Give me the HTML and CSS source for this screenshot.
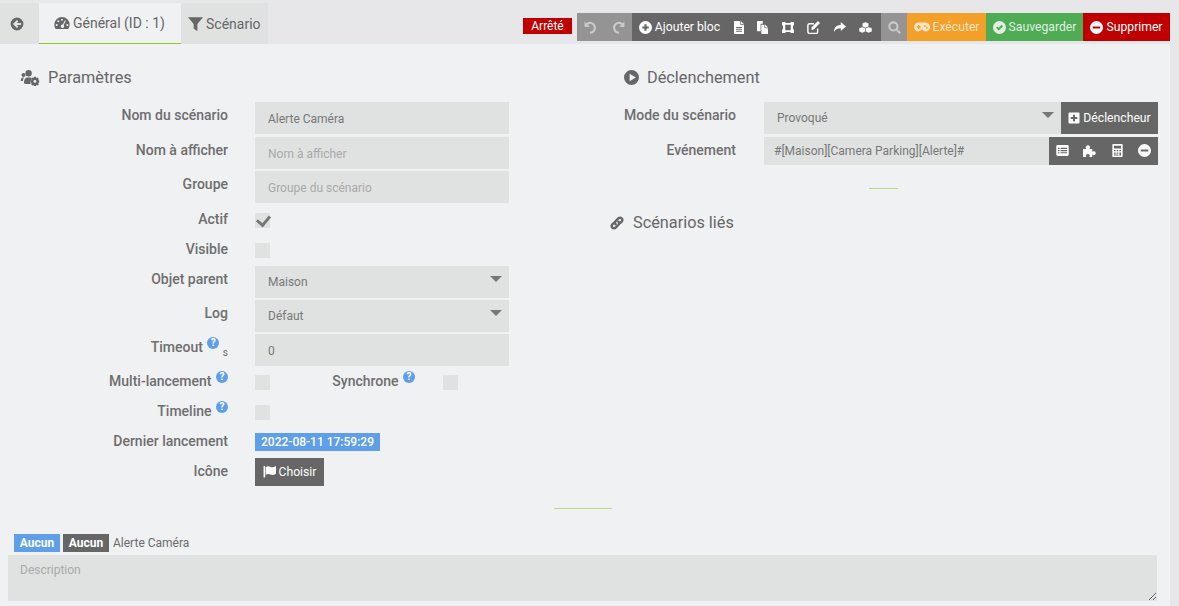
FILE: index.html
```html
<!DOCTYPE html>
<html lang="fr">
<head>
<meta charset="UTF-8">
<meta name="viewport" content="width=device-width, initial-scale=1.0">
<title>Scénario</title>
<link rel="stylesheet" href="styles.css">
</head>
<body>
<svg class="sprite" xmlns="http://www.w3.org/2000/svg">
  <symbol id="i-back" viewBox="0 0 24 24"><path fill-rule="evenodd" d="M12 1a11 11 0 1 0 0 22a11 11 0 1 0 0-22zM12 5L5 12l7 7 2.5-2.5-2.7-2.7H19v-3.600h-7.200l2.700-2.700z"/></symbol>
  <symbol id="i-dash" viewBox="0 0 24 24"><path fill-rule="evenodd" d="M12 3A11.500 11.500 0 0 0 .5 14.500c0 2.500.8 4.800 2.200 6.500h18.600a11.500 11.500 0 0 0 2.200-6.500A11.500 11.500 0 0 0 12 3zM12 5.500a1.500 1.500 0 1 1 0 3a1.500 1.500 0 1 1 0-3zM6.500 8a1.500 1.500 0 1 1 0 3a1.500 1.500 0 1 1 0-3zM4 13.500a1.500 1.500 0 1 1 0 3a1.500 1.500 0 1 1 0-3zM20 13.500a1.500 1.500 0 1 1 0 3a1.500 1.500 0 1 1 0-3zM16.500 7.800l1.300.7-3.300 6.500a2.600 2.600 0 1 1-1.400-.7z"/></symbol>
  <symbol id="i-filter" viewBox="0 0 24 24"><path d="M0 1h24l-9 11v11.500l-6-4.500v-7z"/></symbol>
  <symbol id="i-users" viewBox="0 0 26 24"><circle cx="11" cy="6" r="4.500"/><circle cx="3.800" cy="8.500" r="2.800"/><path d="M0 17c0-3 1-5 3-5h1.500C3.500 13.500 3 15 3 17zM4.500 19c0-4 2-7 4-7h5c1 0 1.500.5 2 1l-2 5.500.5 2.500H7c-1.500 0-2.500-.5-2.500-2z"/><path fill-rule="evenodd" d="M18.500 11h3l.4 1.800 1.700-.8 1.900 2.100-1 1.500 1.500.8v2.800l-1.500.6 1 1.600-1.900 2-1.700-.8-.4 1.400h-3l-.4-1.400-1.700.8-1.900-2 1-1.600-1.500-.6v-2.800l1.500-.8-1-1.500 1.900-2.100 1.700.8zM20 15.500a2 2 0 1 0 0 4a2 2 0 1 0 0-4z"/></symbol>
  <symbol id="i-play" viewBox="0 0 24 24"><path fill-rule="evenodd" d="M12 0a12 12 0 1 0 0 24a12 12 0 1 0 0-24zM9 6l10 6-10 6z"/></symbol>
  <symbol id="i-link" viewBox="0 0 24 24"><g fill="none" stroke="currentColor" stroke-width="3.600" stroke-linecap="round"><path d="M10 14c-1.500-1.500-1.500-3.500 0-5l4-4c1.500-1.500 3.500-1.500 5 0s1.500 3.500 0 5l-2 2"/><path d="M14 10c1.500 1.500 1.500 3.500 0 5l-4 4c-1.500 1.500-3.500 1.500-5 0s-1.500-3.500 0-5l2-2"/></g></symbol>
  <symbol id="i-undo" viewBox="0 0 24 24"><path fill="none" stroke="currentColor" stroke-width="4.200" d="M11 21.500a9 9 0 1 0-6-15.500L3 8"/><path d="M1 1l10 10H1z"/></symbol>
  <symbol id="i-redo" viewBox="0 0 24 24"><path fill="none" stroke="currentColor" stroke-width="4.200" d="M13 21.500a9 9 0 1 1 6-15.500l2 2"/><path d="M23 1L13 11h10z"/></symbol>
  <symbol id="i-plus-circle" viewBox="0 0 24 24"><path fill-rule="evenodd" d="M12 0a12 12 0 1 0 0 24a12 12 0 1 0 0-24zM10 6h4v4h4v4h-4v4h-4v-4H6v-4h4z"/></symbol>
  <symbol id="i-file" viewBox="3 0 19 24" preserveAspectRatio="none"><path fill-rule="evenodd" d="M3 0h12v7h7v17H3zM7 11v1.800h11V11zM7 14.500v1.800h11v-1.800zM7 18v1.800h11V18z"/><path d="M16.500 .5L21.500 5.500h-5z"/></symbol>
  <symbol id="i-copy" viewBox="1 1 23 23" preserveAspectRatio="none"><path d="M1 2.500A1.500 1.500 0 0 1 2.500 1H13v5H8.500v13H1z"/><path d="M10 7.500h6.500V14H24v8.500a1.500 1.500 0 0 1-1.500 1.500h-11a1.500 1.500 0 0 1-1.500-1.500z"/><path d="M18 7l6 5.500h-6z"/></symbol>
  <symbol id="i-frame" viewBox="0 1 24 22" preserveAspectRatio="none"><path fill-rule="evenodd" d="M0 1h7v2h10V1h7v7h-2v8h2v7h-7v-2H7v2H0v-7h2V8H0zM6.500 6.500v11h11v-11z"/></symbol>
  <symbol id="i-edit" viewBox="1 1 22 21.500" preserveAspectRatio="none"><path fill="none" stroke="currentColor" stroke-width="2.400" d="M19 13.500V19a2.500 2.500 0 0 1-2.500 2.500H5A2.500 2.500 0 0 1 2.500 19V8A2.500 2.500 0 0 1 5 5.500h8"/><path d="M9 11.500L19.500 1 23 4.500 12.500 15 8.500 16z"/></symbol>
  <symbol id="i-share" viewBox="1 2 23 20" preserveAspectRatio="none"><path d="M14 2l10 9-10 9v-5.500C8 14.500 4 16 1 22c0-8 4-14 13-14z"/></symbol>
  <symbol id="i-cubes" viewBox="0 0 24 23.500" preserveAspectRatio="none"><g stroke="#666" stroke-width="1"><path d="M12 0l6 2.800v7.400L12 13l-6-2.800V2.800z"/><path d="M6 10.500L12 13v7.500L6 23.500 0 20.500V13z"/><path d="M18 10.500L24 13v7.500l-6 3-6-3V13z"/></g></symbol>
  <symbol id="i-search" viewBox="0 0 24 24"><circle cx="10" cy="10" r="7.500" fill="none" stroke="currentColor" stroke-width="3.800"/><path d="M15 18l3-3 6 6-3 3z"/></symbol>
  <symbol id="i-gamepad" viewBox="0 0 28 24"><path fill-rule="evenodd" d="M8 4h12a8 8 0 0 1 0 16c-2 0-3.500-1.500-4.500-3h-3c-1 1.500-2.500 3-4.500 3A8 8 0 0 1 8 4zM7 8.500v2.300H4.800v2.400H7v2.300h2.400v-2.300h2.200v-2.400H9.400V8.500zM19 9a1.500 1.500 0 1 0 0 3a1.500 1.500 0 1 0 0-3zM22.500 12a1.500 1.500 0 1 0 0 3a1.500 1.500 0 1 0 0-3z"/></symbol>
  <symbol id="i-check-circle" viewBox="0 0 24 24"><path fill-rule="evenodd" d="M12 0a12 12 0 1 0 0 24a12 12 0 1 0 0-24zM5.500 12.500L8 10l2.500 2.500L16 7l2.500 2.500-8 8z"/></symbol>
  <symbol id="i-minus-circle" viewBox="0 0 24 24"><path fill-rule="evenodd" d="M12 0a12 12 0 1 0 0 24a12 12 0 1 0 0-24zM5 10h14v4H5z"/></symbol>
  <symbol id="i-plus-square" viewBox="0 0 24 24"><path fill-rule="evenodd" d="M3 1h18a2 2 0 0 1 2 2v18a2 2 0 0 1-2 2H3a2 2 0 0 1-2-2V3a2 2 0 0 1 2-2zM10 5.500v4.500H5.500v4H10v4.500h4V14h4.500v-4H14V5.500z"/></symbol>
  <symbol id="i-list" viewBox="0 0 24 24"><path fill-rule="evenodd" d="M3 2h18a2.500 2.500 0 0 1 2.500 2.500v15A2.500 2.500 0 0 1 21 22H3a2.500 2.500 0 0 1-2.500-2.500v-15A2.500 2.500 0 0 1 3 2zM3.500 7v2.300h3V7zM8.500 7v2.300h12V7zM3.500 11v2.300h3V11zM8.500 11v2.300h12V11zM3.500 15v2.300h3V15zM8.500 15v2.300h12V15z"/></symbol>
  <symbol id="i-puzzle" viewBox="0 0 24 24"><path d="M0 9h6C4.500 7.500 4.500 5 6 3.500c1.500-1.500 4.500-1.500 6 0 1.300 1.500 1.300 4-.2 5.500H17v5.500c1.300-1.300 3.500-1.500 5-.5 2 1.300 2 4.500 0 6-1.500 1-3.700.8-5-.5V24h-5.500c1.300-1.500 1.300-3.500.3-4.500-1.300-1.300-4.300-1.300-5.600 0-1 1-1 3 .3 4.500H0z"/></symbol>
  <symbol id="i-calc" viewBox="0 0 24 24"><path fill-rule="evenodd" d="M4 0h16a1.500 1.500 0 0 1 1.500 1.500v21A1.500 1.500 0 0 1 20 24H4a1.500 1.500 0 0 1-1.500-1.500v-21A1.500 1.500 0 0 1 4 0zM5.500 3v5.500h13V3zM5.500 11v2.500h3V11zM10.500 11v2.500h3V11zM15.500 11v2.500h3V11zM5.500 15.500V18h3v-2.500zM10.500 15.500V18h3v-2.500zM15.500 15.500V21h3v-5.500zM5.500 19.500V21h8v-1.500z"/></symbol>
  <symbol id="i-flag" viewBox="0 0 24 24"><path d="M1 2h3v21H1z"/><path d="M5 4c3-2 6-2 9-.5 2.500 1.200 5.500 1 10-1.500v14c-4 2.500-7 3-10 1.500-3-1.500-6-1.500-9 .5z"/></symbol>
</svg>

<div class="topbar">
  <nav class="tabs">
    <a class="tab tab-back"><svg class="icon icon-back"><use href="#i-back"/></svg></a>
    <a class="tab tab-active"><svg class="icon icon-tab"><use href="#i-dash"/></svg>Général (ID : 1)</a>
    <a class="tab tab-scenario"><svg class="icon icon-tab"><use href="#i-filter"/></svg>Scénario</a>
  </nav>
  <div class="actions">
    <span class="state">Arrêté</span>
    <div class="toolbar">
      <a class="btn btn-grey"><svg class="icon"><use href="#i-undo"/></svg></a>
      <a class="btn btn-grey"><svg class="icon"><use href="#i-redo"/></svg></a>
      <a class="btn btn-dark btn-add"><svg class="icon"><use href="#i-plus-circle"/></svg>Ajouter bloc</a>
      <a class="btn btn-dark btn-tool"><svg class="icon icon-file"><use href="#i-file"/></svg></a>
      <a class="btn btn-dark btn-tool"><svg class="icon icon-copy"><use href="#i-copy"/></svg></a>
      <a class="btn btn-dark btn-tool"><svg class="icon icon-frame"><use href="#i-frame"/></svg></a>
      <a class="btn btn-dark btn-tool"><svg class="icon icon-edit"><use href="#i-edit"/></svg></a>
      <a class="btn btn-dark btn-tool"><svg class="icon icon-share"><use href="#i-share"/></svg></a>
      <a class="btn btn-dark btn-tool btn-last"><svg class="icon icon-cubes"><use href="#i-cubes"/></svg></a>
      <a class="btn btn-grey btn-search"><svg class="icon"><use href="#i-search"/></svg></a>
      <a class="btn btn-orange"><svg class="icon icon-wide"><use href="#i-gamepad"/></svg>Exécuter</a>
      <a class="btn btn-green"><svg class="icon"><use href="#i-check-circle"/></svg>Sauvegarder</a>
      <a class="btn btn-red"><svg class="icon"><use href="#i-minus-circle"/></svg>Supprimer</a>
    </div>
  </div>
</div>

<main class="content">
  <div class="columns">
    <section class="col-left">
      <h3 class="title title-left"><svg class="icon icon-title-wide"><use href="#i-users"/></svg>Paramètres</h3>

      <div class="row row-text">
        <label class="lbl">Nom du scénario</label>
        <input class="field" type="text" value="Alerte Caméra">
      </div>
      <div class="row row-text">
        <label class="lbl">Nom à afficher</label>
        <input class="field" type="text" placeholder="Nom à afficher">
      </div>
      <div class="row row-text">
        <label class="lbl">Groupe</label>
        <input class="field" type="text" placeholder="Groupe du scénario">
      </div>
      <div class="row row-check">
        <label class="lbl">Actif</label>
        <input class="check" type="checkbox" checked>
      </div>
      <div class="row row-check">
        <label class="lbl">Visible</label>
        <input class="check" type="checkbox">
      </div>
      <div class="row">
        <label class="lbl">Objet parent</label>
        <div class="select-wrap"><select class="field"><option>Maison</option></select></div>
      </div>
      <div class="row">
        <label class="lbl">Log</label>
        <div class="select-wrap"><select class="field"><option>Défaut</option></select></div>
      </div>
      <div class="row">
        <label class="lbl">Timeout <span class="help">?</span> <sub class="unit">s</sub></label>
        <input class="field" type="text" value="0">
      </div>
      <div class="row row-check">
        <label class="lbl">Multi-lancement <span class="help">?</span></label>
        <input class="check" type="checkbox">
        <label class="lbl lbl-inline">Synchrone <span class="help">?</span></label>
        <input class="check" type="checkbox">
      </div>
      <div class="row row-check">
        <label class="lbl">Timeline <span class="help">?</span></label>
        <input class="check" type="checkbox">
      </div>
      <div class="row row-check">
        <label class="lbl">Dernier lancement</label>
        <span class="badge badge-blue badge-date">2022-08-11 17:59:29</span>
      </div>
      <div class="row row-check">
        <label class="lbl">Icône</label>
        <a class="btn btn-dark btn-choose"><svg class="icon"><use href="#i-flag"/></svg>Choisir</a>
      </div>
    </section>

    <section class="col-right">
      <h3 class="title title-indent"><svg class="icon icon-title"><use href="#i-play"/></svg>Déclenchement</h3>
      <div class="row row-text">
        <label class="lbl lbl-right">Mode du scénario</label>
        <div class="select-wrap select-grow"><select class="field"><option>Provoqué</option></select></div>
        <a class="btn btn-dark btn-trigger"><svg class="icon icon-plus"><use href="#i-plus-square"/></svg>Déclencheur</a>
      </div>
      <div class="row row-event">
        <label class="lbl lbl-right">Evénement</label>
        <input class="field field-event" type="text" value="#[Maison][Camera Parking][Alerte]#">
        <a class="btn btn-dark btn-sm"><svg class="icon"><use href="#i-list"/></svg></a>
        <a class="btn btn-dark btn-sm"><svg class="icon"><use href="#i-puzzle"/></svg></a>
        <a class="btn btn-dark btn-sm"><svg class="icon"><use href="#i-calc"/></svg></a>
        <a class="btn btn-dark btn-sm"><svg class="icon"><use href="#i-minus-circle"/></svg></a>
      </div>
      <hr class="sep sep-right">
      <h3 class="title title-linked"><svg class="icon icon-link"><use href="#i-link"/></svg>Scénarios liés</h3>
    </section>
  </div>

  <hr class="sep">

  <div class="summary">
    <span class="badge badge-blue">Aucun</span>
    <span class="badge badge-dark">Aucun</span>
    <span class="summary-name">Alerte Caméra</span>
  </div>
  <textarea class="description" placeholder="Description"></textarea>
</main>
</body>
</html>
```

FILE: styles.css
```css
* {
  box-sizing: border-box;
}
html, body {
  height: 100%;
}
body {
  margin: 0;
  overflow: hidden;
  background-color: #e7e7e9;
  color: #6b6b6b;
  font-family: Roboto, "Liberation Sans", sans-serif;
  font-size: 14px;
}
.sprite {
  display: none;
}
.icon {
  width: 13px;
  height: 13px;
  fill: currentColor;
  flex: none;
}

/* top bar */
.topbar {
  display: flex;
  justify-content: space-between;
  height: 44px;
  padding-top: 3px;
  padding-right: 9px;
}
.tabs {
  display: flex;
}
.tab {
  display: flex;
  align-items: center;
  gap: 3px;
  height: 41px;
  background-color: #e0e2e1;
  color: #666;
  font-size: 14px;
}
.tab-back {
  width: 39px;
  padding-left: 10px;
}
.icon-back {
  width: 14px;
  height: 14px;
}
.tab-active {
  width: 142px;
  padding-left: 15px;
  background-color: #f0f1f3;
  border-bottom: 1px solid #93c927;
}
.tab-scenario {
  width: 87px;
  padding-left: 7px;
}
.icon-tab {
  width: 16px;
  height: 16px;
}
.tab-scenario .icon-tab {
  width: 15px;
}
.actions {
  display: flex;
  align-items: flex-start;
  gap: 5px;
  padding-top: 10px;
}
.state {
  margin-top: 5px;
  width: 49px;
  height: 16px;
  background-color: #c00000;
  color: #fff;
  font-size: 12px;
  line-height: 16px;
  text-align: center;
}
.toolbar {
  display: flex;
}
.btn {
  display: flex;
  align-items: center;
  justify-content: center;
  gap: 3px;
  height: 28px;
  color: #fff;
  font-size: 12.2px;
  white-space: nowrap;
}
.btn-grey {
  width: 27.5px;
  background-color: #949494;
  color: #c9c9c9;
}
.btn-search {
  width: 26px;
}
.btn-dark {
  background-color: #666;
}
.btn-add {
  width: 95px;
}
.btn-tool {
  padding: 0 6.75px;
}
.btn-last {
  padding-right: 8.75px;
}
.icon-file {
  width: 10px;
}
.icon-copy {
  width: 11px;
}
.icon-frame {
  width: 12px;
  height: 11px;
}
.icon-edit {
  width: 13px;
}
.icon-share {
  width: 12px;
  height: 10px;
}
.icon-cubes {
  width: 13px;
  height: 11px;
}
.btn-orange {
  width: 79px;
  background-color: #f2a02a;
  color: #fbe3c0;
}
.btn-green {
  width: 97px;
  background-color: #50ac54;
  color: #dff0e0;
}
.btn-red {
  width: 87px;
  background-color: #c00000;
}
.icon-wide {
  width: 16px;
  height: 14px;
}

/* content */
.content {
  height: 562px;
  margin-right: 9px;
  padding: 20px 13px 0 8px;
  background-color: #f0f1f3;
}
.columns {
  display: grid;
  grid-template-columns: 601px 549px;
}
.title {
  display: flex;
  align-items: center;
  gap: 8px;
  height: 26px;
  margin: 0 0 12px;
  color: #666;
  font-size: 16.3px;
  font-weight: 400;
}
.title-left {
  padding-left: 12px;
}
.title-indent {
  padding-left: 15px;
}
.title-linked {
  margin-top: 21px;
}
.icon-title {
  width: 15px;
  height: 15px;
}
.icon-link {
  width: 16px;
  height: 16px;
}
.icon-title-wide {
  width: 20px;
  height: 17px;
}

/* form rows */
.row {
  display: flex;
  align-items: flex-start;
  height: 34px;
}
.row-text {
  height: 34.5px;
}
.row-check {
  height: 30px;
}
.row-event {
  height: 28px;
}
.lbl {
  width: 220px;
  margin-right: 27px;
  font-size: 14px;
  font-weight: 500;
  line-height: 26px;
  text-align: right;
  white-space: nowrap;
  color: #6e6e6e;
}
.lbl-right {
  width: 127px;
  margin-right: 28px;
}
.lbl-inline {
  width: 145px;
  margin-right: 28px;
}
.help {
  display: inline-block;
  width: 12px;
  height: 12px;
  margin-left: 1px;
  border-radius: 50%;
  background-color: #5f9ee9;
  color: #fff;
  font-size: 10px;
  font-weight: 700;
  line-height: 12px;
  text-align: center;
  vertical-align: 6px;
}
.unit {
  font-size: 10px;
  font-weight: 400;
}
.field {
  width: 254px;
  height: 32px;
  padding: 2px 13px 0;
  border: 0;
  border-radius: 0;
  outline: 0;
  background-color: #e0e2e1;
  color: #777;
  font-family: inherit;
  font-size: 12px;
  appearance: none;
}
select.field {
  padding-top: 0;
}
.field::placeholder {
  color: #a9a9a9;
}
.field-event {
  width: 285px;
  height: 28px;
  padding: 0 10px;
}
.select-wrap {
  position: relative;
  width: 254px;
}
.select-wrap .field {
  width: 100%;
}
.select-wrap::after {
  content: "";
  position: absolute;
  top: 10px;
  right: 7px;
  border-left: 6.5px solid transparent;
  border-right: 6.5px solid transparent;
  border-top: 6.5px solid #777;
}
.select-grow {
  width: 297px;
}
.check {
  position: relative;
  width: 15px;
  height: 15px;
  margin: 7px 0 0;
  background-color: #e0e2e1;
  appearance: none;
  flex: none;
}
.check:checked::after {
  content: "";
  position: absolute;
  left: 4px;
  top: 0;
  width: 6px;
  height: 10px;
  border: solid #777;
  border-width: 0 3px 3px 0;
  transform: rotate(40deg);
}
.badge {
  display: inline-block;
  height: 18px;
  width: 46px;
  color: #fff;
  font-size: 12px;
  font-weight: 700;
  line-height: 18px;
  text-align: center;
}
.badge-blue {
  background-color: #5f9ee9;
}
.badge-dark {
  background-color: #666;
}
.badge-date {
  margin-top: 5px;
  width: 125px;
  font-weight: 500;
  white-space: nowrap;
}
.btn-choose {
  width: 69px;
}
.btn-trigger {
  width: 97px;
  height: 32px;
}
.icon-plus {
  width: 12px;
  height: 12px;
}
.btn-sm {
  width: 27.25px;
}

/* bottom */
.sep {
  width: 58px;
  height: 1px;
  margin: 20px auto 25px;
  border: 0;
  background-color: #b8d98a;
}
.sep-right {
  width: 29px;
  margin: 23px auto 0;
}
.summary {
  display: flex;
  align-items: center;
  gap: 3px;
  height: 18px;
  margin-left: 6px;
  margin-bottom: 3px;
  font-size: 12px;
}
.summary-name {
  margin-left: 1px;
  font-weight: 400;
}
.description {
  display: block;
  width: 1149px;
  height: 46px;
  padding: 8px 12px;
  border: 0;
  outline: 0;
  background-color: #e0e2e1;
  color: #777;
  font-family: inherit;
  font-size: 12px;
}
.description::placeholder {
  color: #a9a9a9;
}
```
